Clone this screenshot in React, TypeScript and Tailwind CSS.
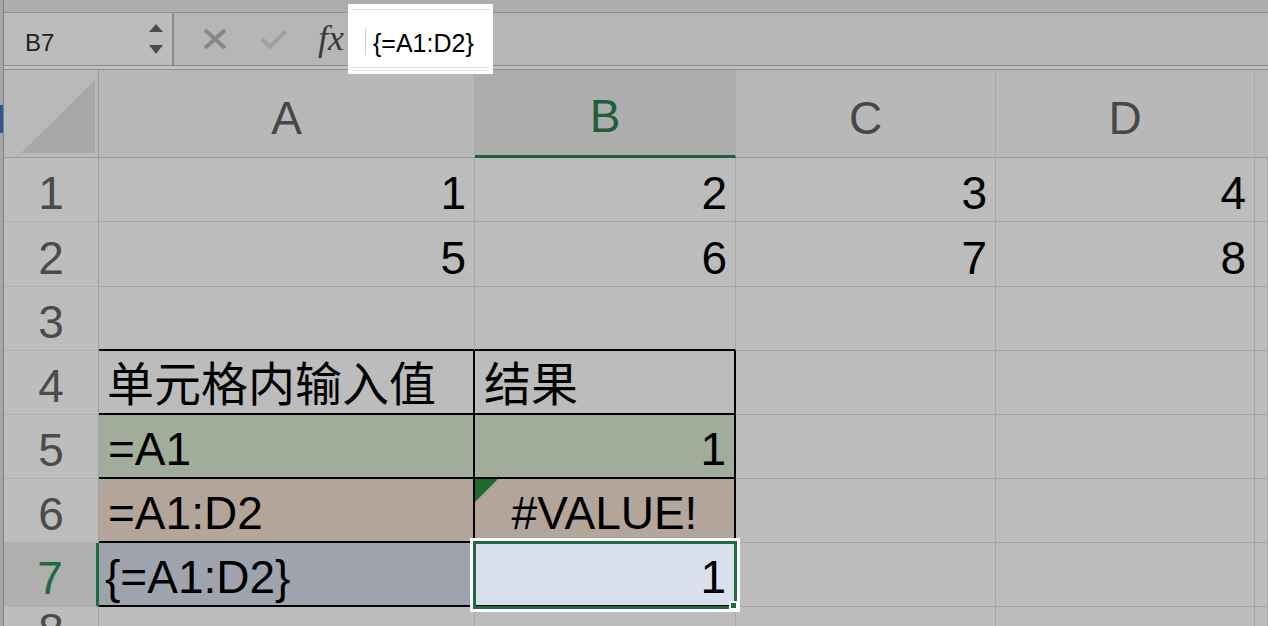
import React from "react";

// grid line classes, written out in full so tailwind picks them up
const BOT = {
  g: "border-b border-b-[#a4a4a4]",
  k: "border-b-2 border-b-black",
};
const RIG = {
  g: "border-r border-r-[#a4a4a4]",
  k: "border-r-2 border-r-black",
};

type CellProps = {
  children?: React.ReactNode;
  b?: "g" | "k";
  r?: "g" | "k";
  className?: string;
};

function Cell({ children, b = "g", r = "g", className = "" }: CellProps) {
  return (
    <div
      className={`flex items-end whitespace-nowrap pb-[5px] text-[46px] leading-none text-black ${BOT[b]} ${RIG[r]} ${className}`}
    >
      {children}
    </div>
  );
}

function RowHead({ n, active = false }: { n: number; active?: boolean }) {
  return (
    <div
      className={`flex items-end justify-center border-b border-b-[#b0b0b0] pb-[5px] text-[46px] leading-none ${
        active
          ? "border-r-[3px] border-r-[#1e6b41] bg-[#afafaf] text-[#1e6b41]"
          : "border-r border-r-[#a0a0a0] bg-[#bdbdbd] text-[#4b4b4b]"
      }`}
    >
      {n}
    </div>
  );
}

function ColHead({ l, active = false }: { l: string; active?: boolean }) {
  return (
    <div
      className={`flex items-end justify-center pb-[16px] text-[46px] leading-none ${
        active
          ? "border-b-[3px] border-b-[#1e5e3a] border-r border-r-[#a9a9a9] bg-[#adadad] text-[#1e5e3a]"
          : "border-b border-b-[#999999] border-r border-r-[#a9a9a9] bg-[#b8b8b8] text-[#474747]"
      }`}
    >
      {l}
    </div>
  );
}

function Toolbar() {
  return (
    <>
      <div className="h-[13px] shrink-0 border-b border-[#8e8e8e] bg-[#adadad]" />
      <div className="flex h-[53px] shrink-0 border-b border-[#8a8a8a] bg-[#b6b6b6]">
        {/* name box */}
        <div className="flex w-[170px] items-end justify-between border-r-2 border-[#8e8e8e] bg-[#bcbcbc] pb-[10px] pl-[21px] pr-[9px]">
          <span className="text-[24px] leading-none text-[#222]">B7</span>
          <svg width="14" height="31" viewBox="0 0 14 31" className="mb-[0px]">
            <polygon points="0,8 7,0 14,8" fill="#4d4d4d" />
            <polygon points="0,21 14,21 7,30" fill="#4d4d4d" />
          </svg>
        </div>
        <svg width="24" height="20" viewBox="0 0 24 20" className="ml-[29px] self-center">
          <path d="M2 1 L22 19 M22 1 L2 19" stroke="#888888" strokeWidth="4" />
        </svg>
        <svg width="28" height="20" viewBox="0 0 28 20" className="ml-[33px] self-center">
          <path d="M2 10 L10 18 L26 2" stroke="#a0a0a0" strokeWidth="4" fill="none" />
        </svg>
        <span className="ml-[30px] self-end pb-[9px] font-['Liberation_Serif',serif] text-[36px] italic leading-none text-[#3a3a3a]">
          fx
        </span>
      </div>
      <div className="h-[4px] shrink-0 border-b border-[#8e8e8e] bg-[#c2c2c2]" />
    </>
  );
}

function Sheet() {
  const top = [
    ["1", "2", "3", "4"],
    ["5", "6", "7", "8"],
  ];
  return (
    <div className="grid shrink-0 grid-cols-[95px_376px_261px_260px_259px_1fr] grid-rows-[88px_64px_65px_64px_64px_64px_64px_64px]">
      {/* header row */}
      <div className="flex items-end justify-end border-b border-r border-[#999999] bg-[#b9b9b9] pb-[4px] pr-[3px]">
        <svg width="74" height="73" viewBox="0 0 74 73">
          <polygon points="74,0 74,73 0,73" fill="#a8a8a8" />
        </svg>
      </div>
      <ColHead l="A" />
      <ColHead l="B" active />
      <ColHead l="C" />
      <ColHead l="D" />
      <div className="border-b border-b-[#999999] bg-[#b8b8b8]" />

      {/* rows 1-2 */}
      {top.map((vals, i) => (
        <React.Fragment key={i}>
          <RowHead n={i + 1} />
          {vals.map((v) => (
            <Cell key={v} className="justify-end pr-[8px]">
              {v}
            </Cell>
          ))}
          <Cell r="g" />
        </React.Fragment>
      ))}

      {/* row 3 */}
      <RowHead n={3} />
      <Cell b="k" />
      <Cell b="k" />
      <Cell />
      <Cell />
      <Cell />

      {/* row 4 */}
      <RowHead n={4} />
      <Cell b="k" r="k" className="pl-[8px] text-[47px]">
        单元格内输入值
      </Cell>
      <Cell b="k" r="k" className="pl-[9px] text-[47px]">
        结果
      </Cell>
      <Cell />
      <Cell />
      <Cell />

      {/* row 5 */}
      <RowHead n={5} />
      <Cell b="k" r="k" className="bg-[#a2ac9b] pl-[9px]">
        =A1
      </Cell>
      <Cell b="k" r="k" className="justify-end bg-[#a2ac9b] pr-[8px]">
        1
      </Cell>
      <Cell />
      <Cell />
      <Cell />

      {/* row 6 */}
      <RowHead n={6} />
      <Cell b="k" r="k" className="bg-[#b4a59b] pl-[9px]">
        =A1:D2
      </Cell>
      <Cell b="k" r="k" className="relative justify-center bg-[#b4a59b] text-[43px]">
        <svg width="23" height="23" viewBox="0 0 23 23" className="absolute left-0 top-0">
          <polygon points="0,0 23,0 0,23" fill="#1d6a2a" />
        </svg>
        #VALUE!
      </Cell>
      <Cell />
      <Cell />
      <Cell />

      {/* row 7 */}
      <RowHead n={7} active />
      <Cell b="k" r="k" className="bg-[#9ea3ae] pl-[6px]">
        {"{=A1:D2}"}
      </Cell>
      <Cell b="k" r="k" className="relative justify-end bg-[#dadfec] pr-[8px]">
        1
        <div className="absolute -bottom-[7px] -left-[5px] -right-[6px] -top-[5px] z-10 border-[3px] border-white">
          <div className="h-full w-full border-[3px] border-[#1e6b41]" />
          <div className="absolute -bottom-[1px] -right-[1px] h-[9px] w-[9px] border-2 border-white bg-[#1e6b41]" />
        </div>
      </Cell>
      <Cell />
      <Cell />
      <Cell />

      {/* row 8 (cut off) */}
      <RowHead n={8} />
      <Cell />
      <Cell />
      <Cell />
      <Cell />
      <Cell />
    </div>
  );
}

export default function App() {
  return (
    <div className="flex h-[626px] w-[1268px] overflow-hidden bg-[#bcbcbc] font-['Liberation_Sans','Noto_Sans_CJK_SC',sans-serif]">
      {/* sliver of the window behind */}
      <div className="flex w-[4px] shrink-0 flex-col border-r border-[#7f8189] bg-[#a4a6ac]">
        <div className="mt-[105px] h-[28px] bg-[#34568f]" />
      </div>
      <div className="relative flex flex-1 flex-col">
        <Toolbar />
        <Sheet />
        {/* highlighted formula box */}
        <div className="absolute left-[344px] top-[4px] z-20 h-[70px] w-[145px] border-[4px] border-white bg-white">
          <div className="absolute left-0 right-0 top-[1px] h-[1px] bg-[#dedede]" />
          <div className="absolute bottom-[2px] left-0 right-0 h-[1px] bg-[#dcdcdc]" />
          <div className="absolute bottom-[-1px] left-0 right-0 h-[1px] bg-[#e4e4e4]" />
          <div className="absolute left-[13px] top-[20px] h-[27px] w-[1px] bg-[#cfcfcf]" />
          <span className="absolute left-[21px] top-[23px] text-[25px] leading-none text-black">
            {"{=A1:D2}"}
          </span>
        </div>
      </div>
    </div>
  );
}
